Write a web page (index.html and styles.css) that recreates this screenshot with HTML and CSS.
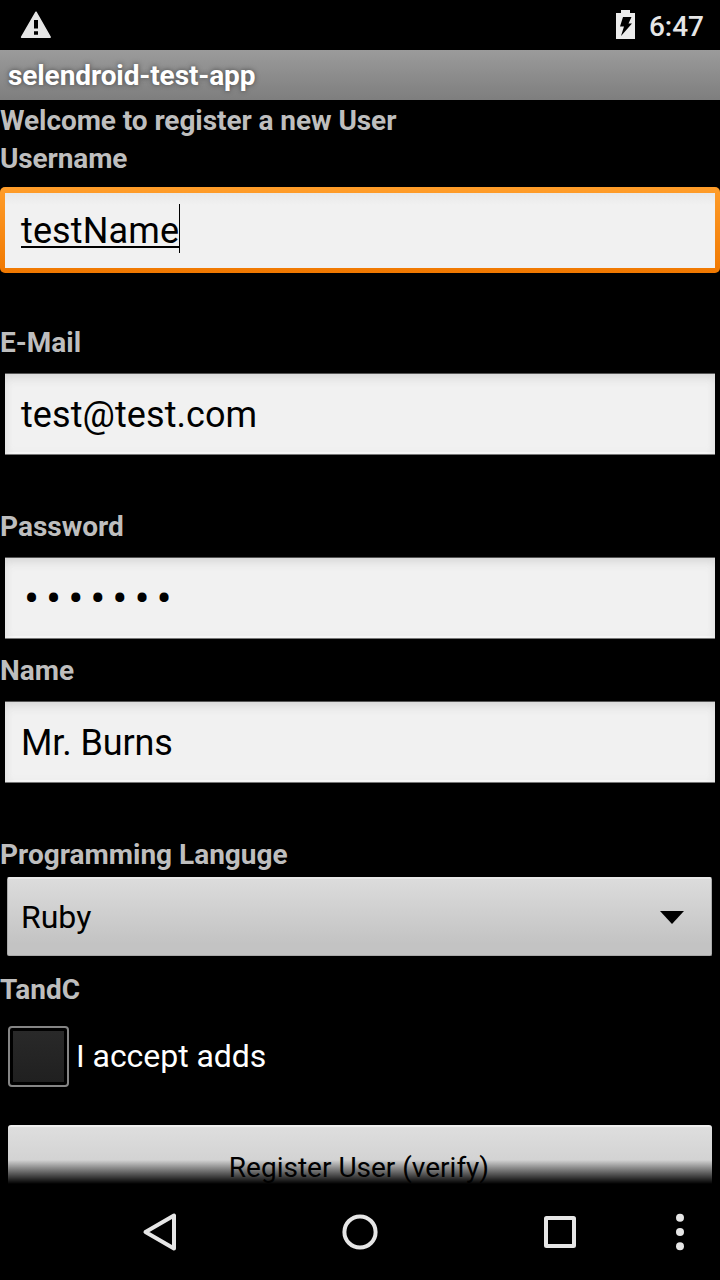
FILE: index.html
```html
<!DOCTYPE html>
<html lang="en">
<head>
<meta charset="utf-8">
<title>selendroid-test-app</title>
<link rel="stylesheet" href="styles.css">
</head>
<body>
<div class="screen">
  <header class="status">
    <svg class="warning" width="32" height="29" viewBox="0 0 32 29"><path fill="#e6e6e6" stroke="#e6e6e6" stroke-width="1.500" stroke-linejoin="round" d="M16 2.200 30.200 27.200H1.600Z"/><path fill="#000" d="M14 10h4v8.500h-4zM14 21.300h4v3.500h-4z"/></svg>
    <div class="status-right">
      <svg width="19" height="29" viewBox="0 0 19 29"><path fill="#ececec" d="M5 0h9v3h5v26H0V3h5z"/><path fill="#000" d="M7 7h8.500l-3 6.500H16L5 26l3-9.500H4z"/></svg>
      <span class="clock">6:47</span>
    </div>
  </header>
  <div class="title">selendroid-test-app</div>
  <main class="form">
    <div class="label welcome">Welcome to register a new User</div>
    <div class="label username">Username</div>
    <div class="field focused"><span class="composing">testName</span><span class="caret"></span></div>
    <div class="label after-focus">E-Mail</div>
    <div class="field email">test@test.com</div>
    <div class="label spaced">Password</div>
    <div class="field"><span class="dots">•••••••</span></div>
    <div class="label close">Name</div>
    <div class="field name">Mr. Burns</div>
    <div class="label spaced">Programming Languge</div>
    <div class="spinner"><span>Ruby</span><svg width="24" height="13" viewBox="0 0 24 13"><path d="M0 0h24L12 13z"/></svg></div>
    <div class="label tandc">TandC</div>
    <div class="check-row"><span class="check"><span class="check-fill"></span></span><span class="check-text">I accept adds</span></div>
    <div class="button">Register User (verify)</div>
  </main>
  <nav class="nav">
    <svg width="720" height="96" viewBox="0 0 720 96" fill="none" stroke="#e6e6e6" stroke-width="4" stroke-linejoin="round"><path d="M174 31.500v33L145.500 48z"/><circle cx="360" cy="48" r="15.600"/><rect x="546" y="34" width="28" height="28" rx=".5"/><g fill="#e6e6e6" stroke="none"><circle cx="680" cy="33.700" r="4"/><circle cx="680" cy="48" r="4"/><circle cx="680" cy="62.300" r="4"/></g></svg>
  </nav>
</div>
</body>
</html>
```
FILE: styles.css
```css
* { box-sizing: border-box; }
body { margin: 0; background: #000; font-family: Roboto, "Liberation Sans", sans-serif; }
svg { display: block; }
.screen { display: flex; flex-direction: column; width: 720px; height: 1280px; overflow: hidden; background: #000; }
.status { display: flex; flex: none; justify-content: space-between; height: 50px; padding: 10px 16px 0 20px; }
.status-right { display: flex; gap: 14px; }
.clock { font-size: 28px; line-height: 34px; font-weight: 500; color: #e6e6e6; }
.title { flex: none; height: 50px; padding-left: 8px; background: linear-gradient(#9b9b9b, #7e7e7e); color: #fff; font-size: 28px; line-height: 51px; font-weight: 700; letter-spacing: -.1px; text-shadow: 0 0 5px #444; }
.form { position: relative; flex: none; height: 1084px; padding-top: 1px; overflow: hidden; }
.form::after { content: ""; position: absolute; left: 0; right: 0; bottom: 0; height: 24px; background: linear-gradient(rgba(0,0,0,0), #000); }
.label { height: 38px; line-height: 40px; font-size: 28px; font-weight: 700; color: #bebebe; white-space: nowrap; }
.welcome { letter-spacing: -.07px; }
.username { letter-spacing: -.12px; }
.field { display: flex; align-items: center; height: 82px; margin: 12px 5px 0; padding: 2px 0 0 16px; border: 1px solid #777; border-top-color: #555; border-width: 1px 0; background: #f1f1f1; box-shadow: inset 0 6px 12px -4px #d0d0d0, inset 0 0 8px #e8e8e8, inset 0 -2px 0 #fff; color: #000; font-size: 36px; line-height: 42px; }
.focused { align-items: flex-start; height: 86px; margin: 10px 0 0; border: 0; border-radius: 5px; background: linear-gradient(#e8e8e8, #f1f1f1 12px) content-box, linear-gradient(#ff9d2a, #f07800); padding: 6px 5px 5px; box-shadow: none; }
.composing { margin: 17px 0 0 16px; height: 38px; border-bottom: 2px solid #000; letter-spacing: .12px; }
.caret { width: 1px; height: 49px; margin-top: 11px; background: #000; }
.email { letter-spacing: .08px; }
.name { letter-spacing: -.12px; }
.after-focus { margin-top: 50px; }
.spaced { margin-top: 52px; }
.close { margin-top: 12px; }
.dots { margin-left: 3px; font-size: 45px; letter-spacing: 6.900px; }
.spinner { display: flex; align-items: center; justify-content: space-between; height: 79px; margin: 4px 8px 0 7px; padding: 0 27px 0 13px; border-radius: 2px; border: 1px solid #aaa; border-top: 2px solid #e8e8e8; background: linear-gradient(176deg, #dedede, #c3c3c3 80%); background: linear-gradient(#dcdcdc, #c3c3c3 85%); font-size: 32px; }
.tandc { margin-top: 14px; }
.check-row { display: flex; align-items: center; height: 61px; margin: 18px 0 0 8px; gap: 7px; color: #fff; font-size: 32px; }
.check { width: 61px; height: 61px; padding: 3px; border: 2px solid #858585; border-radius: 4px; }
.check-fill { display: block; height: 51px; width: 51px; background: linear-gradient(#292929, #202020); }
.check-text { padding-bottom: 2px; letter-spacing: -.05px; }
.button { height: 82px; margin: 38px 8px 0; padding-right: 2px; border-radius: 3px; border-top: 2px solid #eee; background: linear-gradient(#dedede, #c3c3c3); text-align: center; font-size: 28px; line-height: 82px; }
.nav { flex: none; height: 96px; }
```
